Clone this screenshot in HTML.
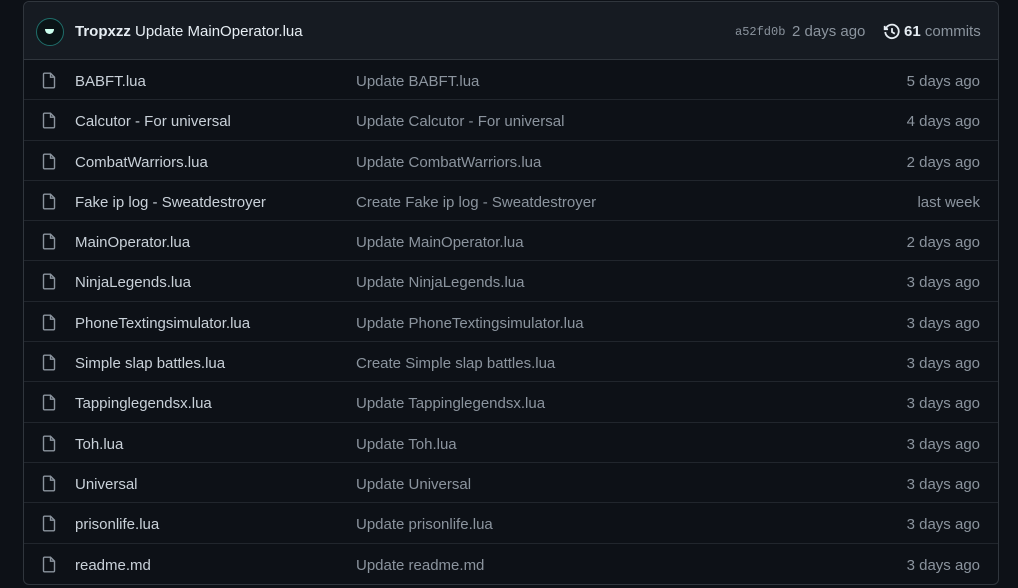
<!DOCTYPE html>
<html><head><style>
body{margin:0;width:1018px;height:588px;background:#0d1117;font-family:"Liberation Sans",sans-serif;overflow:hidden}
.box{position:absolute;left:23px;top:1px;width:974px;height:582px;border:1px solid #30363d;border-radius:6px;overflow:hidden;background:#0d1117}
.hd{height:57px;background:#161b22;border-bottom:1px solid #30363d;position:relative;color:#e6edf3;font-size:15px}
.av{position:absolute;left:12px;top:16px;width:26px;height:26px;border-radius:50%;background:#0a1416;border:1px solid #1f6d6a}
.row{height:39.3px;border-top:1px solid #21262d;position:relative;font-size:15px;color:#c9d1d9}
.row:first-of-type{border-top:none}
.row svg{position:absolute;left:17px;top:12px}
.n{position:absolute;left:51px;top:13px}
.m{position:absolute;left:332px;top:13px;color:#8b949e}
.d{position:absolute;right:18px;top:13px;color:#8b949e}
</style></head><body>
<div class="box">
<div class="hd">
<div class="av"><div style="position:absolute;left:8px;top:10px;width:9px;height:5px;background:#cfe;border-radius:0 0 5px 5px"></div></div>
<div style="position:absolute;left:51px;top:21px"><b>Tropxzz</b> Update MainOperator.lua</div>
<div style="position:absolute;left:711px;top:23px;font-family:'Liberation Mono',monospace;font-size:12px;color:#8b949e">a52fd0b</div>
<div style="position:absolute;left:768px;top:21px;color:#8b949e">2 days ago</div>
<svg style="position:absolute;left:859px;top:21px" width="18" height="18" viewBox="0 0 16 16" fill="none" stroke="#e6edf3" stroke-width="1.6"><path d="M2.5 5A6 6 0 1 1 2 8"/><path d="M1.5 2.5V5.5H4.5"/><path d="M8 4.5V8L10.5 9.5"/></svg>
<div style="position:absolute;left:880px;top:21px"><b>61</b> <span style="color:#8b949e">commits</span></div>
</div>
<div id="rows"></div>
</div>
<script>
var r=[["BABFT.lua","Update BABFT.lua","5 days ago"],["Calcutor - For universal","Update Calcutor - For universal","4 days ago"],["CombatWarriors.lua","Update CombatWarriors.lua","2 days ago"],["Fake ip log - Sweatdestroyer","Create Fake ip log - Sweatdestroyer","last week"],["MainOperator.lua","Update MainOperator.lua","2 days ago"],["NinjaLegends.lua","Update NinjaLegends.lua","3 days ago"],["PhoneTextingsimulator.lua","Update PhoneTextingsimulator.lua","3 days ago"],["Simple slap battles.lua","Create Simple slap battles.lua","3 days ago"],["Tappinglegendsx.lua","Update Tappinglegendsx.lua","3 days ago"],["Toh.lua","Update Toh.lua","3 days ago"],["Universal","Update Universal","3 days ago"],["prisonlife.lua","Update prisonlife.lua","3 days ago"],["readme.md","Update readme.md","3 days ago"]];
var h="";r.forEach(function(x){h+='<div class="row"><svg width="16" height="17" viewBox="0 0 16 17" fill="none" stroke="#8b949e" stroke-width="1.4"><path d="M2.5 2.2Q2.5 1.2 3.5 1.2H9.5L13.5 5.2V14.8Q13.5 15.8 12.5 15.8H3.5Q2.5 15.8 2.5 14.8Z"/><path d="M9.5 1.2V5.2H13.5"/></svg><span class="n">'+x[0]+'</span><span class="m">'+x[1]+'</span><span class="d">'+x[2]+'</span></div>'});
document.getElementById("rows").innerHTML=h;
</script>
</body></html>
